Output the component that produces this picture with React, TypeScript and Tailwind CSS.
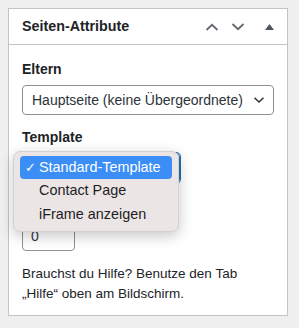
import React from 'react';

const font = { fontFamily: '"Liberation Sans", Arial, sans-serif' };

const Chevron = ({ dir }: { dir: 'up' | 'down' }) => (
  <svg width="14" height="8" viewBox="0 0 14 8" fill="none">
    <path
      d={dir === 'up' ? 'M1.5 7L7 1.8L12.5 7' : 'M1.5 1L7 6.2L12.5 1'}
      stroke="#646970"
      strokeWidth="1.8"
    />
  </svg>
);

const SelectArrow = () => (
  <svg width="12" height="8" viewBox="0 0 12 8" fill="none">
    <path d="M1.5 1.8L6 6L10.5 1.8" stroke="#2c3338" strokeWidth="1.5" />
  </svg>
);

export default function App() {
  return (
    <div className="min-h-[328px] w-[299px] bg-[#f0f0f1] pt-2 pl-2" style={font}>
      <div className="relative w-[280px] border border-[#c3c4c7] bg-white">
        {/* header */}
        <div className="flex h-[36px] items-center border-b border-[#c3c4c7] pl-[13px]">
          <h2 className="flex-1 text-[14.3px] font-bold text-[#1d2327]">Seiten-Attribute</h2>
          <button className="flex h-full w-[26px] items-center justify-center">
            <Chevron dir="up" />
          </button>
          <button className="flex h-full w-[26px] items-center justify-center">
            <Chevron dir="down" />
          </button>
          <button className="flex h-full w-[36px] items-center justify-center">
            <svg width="9" height="6" viewBox="0 0 9 6">
              <path d="M4.5 0L9 6H0Z" fill="#50575e" />
            </svg>
          </button>
        </div>

        {/* body */}
        <div className="px-[13px] pt-[14px] pb-[11px] text-[#1d2327]">
          <p className="text-[14px] leading-[20px] font-bold">Eltern</p>
          <div className="mt-[6px] flex h-[30px] items-center justify-between rounded-[4px] border border-[#8c8f94] pr-[8px] pl-[9px] text-[14px] text-[#2c3338]">
            <span>Hauptseite (keine Übergeordnete)</span>
            <SelectArrow />
          </div>

          <p className="mt-[12px] text-[14px] leading-[20px] font-bold">Template</p>
          {/* focused select, mostly covered by the open popup */}
          <div className="mt-[6px] h-[30px] w-[158px] rounded-[4px] border border-[#2271b1] shadow-[0_0_0_1px_#2271b1]" />

          {/* order label sits under the popup */}
          <div className="mt-[12px] h-[20px]" />
          <div className="mt-[6px] flex h-[30px] w-[53px] items-center rounded-[4px] border border-[#8c8f94] pl-[8px] text-[14px] text-[#2c3338]">
            0
          </div>

          <p className="mt-[13px] text-[13.5px] leading-[20px] text-[#1d2327]">
            Brauchst du Hilfe? Benutze den Tab
            <br />
            „Hilfe“ oben am Bildschirm.
          </p>
        </div>

        {/* native select popup */}
        <div className="absolute top-[142px] left-[4px] w-[166px] rounded-[7px] border border-[#d6d0d0] bg-[#ece5e5] px-[6px] pt-[4px] pb-[4px] text-[14.4px] shadow-[0_4px_14px_rgba(0,0,0,0.22)]">
          <div className="flex h-[23px] items-center rounded-[4px] bg-[#3b8ef5] text-white">
            <span className="w-[19px] pl-[5px] text-[13px]">✓</span>
            <span>Standard-Template</span>
          </div>
          <div className="flex h-[24px] items-center pl-[19px] text-[#1d1d1f]">Contact Page</div>
          <div className="flex h-[24px] items-center pl-[19px] text-[#1d1d1f]">iFrame anzeigen</div>
        </div>
      </div>
    </div>
  );
}
